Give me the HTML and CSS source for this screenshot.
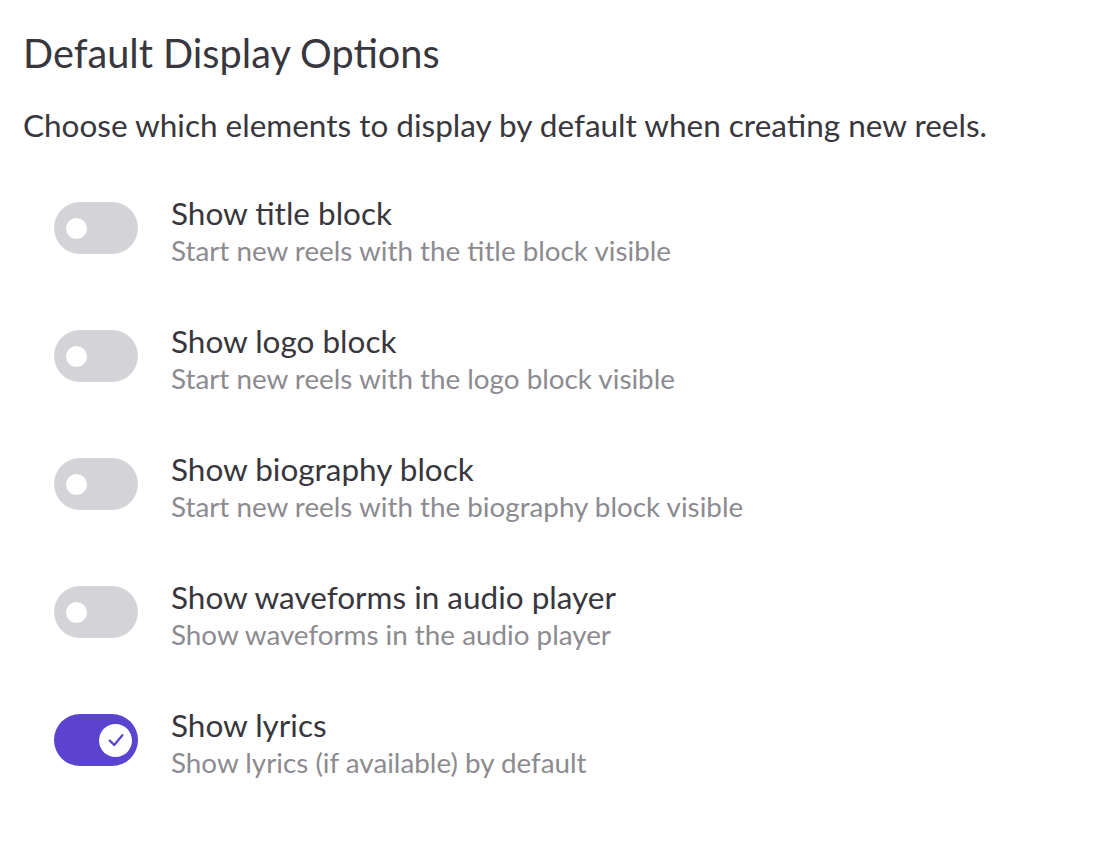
FILE: index.html
```html
<!DOCTYPE html>
<html lang="en">
<head>
<meta charset="utf-8">
<link rel="stylesheet" href="styles.css">
</head>
<body>
<main class="settings">
  <h1 class="heading">Default Display Options</h1>
  <p class="intro">Choose which elements to display by default when creating new reels.</p>
  <div class="options">
    <div class="option">
      <span class="switch"><span class="knob"></span></span>
      <div class="text">
        <div class="label">Show title block</div>
        <div class="hint">Start new reels with the title block visible</div>
      </div>
    </div>
    <div class="option">
      <span class="switch"><span class="knob"></span></span>
      <div class="text">
        <div class="label">Show logo block</div>
        <div class="hint">Start new reels with the logo block visible</div>
      </div>
    </div>
    <div class="option">
      <span class="switch"><span class="knob"></span></span>
      <div class="text">
        <div class="label">Show biography block</div>
        <div class="hint">Start new reels with the biography block visible</div>
      </div>
    </div>
    <div class="option">
      <span class="switch"><span class="knob"></span></span>
      <div class="text">
        <div class="label">Show waveforms in audio player</div>
        <div class="hint">Show waveforms in the audio player</div>
      </div>
    </div>
    <div class="option">
      <span class="switch on"><span class="knob"><svg class="check" viewBox="0 0 22 22" width="22" height="22"><path d="M4.8 11.6 L9.2 16 L17.4 6.2" fill="none" stroke="#5b42cf" stroke-width="2.3" stroke-linecap="round" stroke-linejoin="round"/></svg></span></span>
      <div class="text">
        <div class="label">Show lyrics</div>
        <div class="hint">Show lyrics (if available) by default</div>
      </div>
    </div>
  </div>
</main>
</body>
</html>
```
FILE: styles.css
```css
html, body {
  margin: 0;
  padding: 0;
  background: #ffffff;
}
body {
  font-family: Lato, "Open Sans", sans-serif;
  color: #37373d;
}
.settings {
  padding: 30px 0 0 23px;
}
.heading {
  margin: 0;
  font-size: 39.7px;
  line-height: 46px;
  font-weight: 400;
  color: #37373d;
}
.intro {
  margin: 30px 0 0 0;
  font-size: 31.5px;
  line-height: 38px;
  color: #37373d;
}
.options {
  margin: 50px 0 0 31px;
  display: flex;
  flex-direction: column;
  gap: 52px;
}
.option {
  display: flex;
  align-items: flex-start;
  gap: 33px;
}
.switch {
  flex: none;
  width: 84px;
  height: 52px;
  margin-top: 8px;
  border-radius: 26px;
  background: #d3d3d8;
  display: flex;
  align-items: center;
  padding-left: 12px;
  box-sizing: border-box;
}
.switch .knob {
  width: 21px;
  height: 21px;
  border-radius: 50%;
  background: #ffffff;
}
.switch.on {
  background: #5b42cf;
  justify-content: flex-end;
  padding-left: 0;
  padding-right: 6px;
}
.switch.on .knob {
  width: 33px;
  height: 33px;
  display: flex;
  align-items: center;
  justify-content: center;
}
.label {
  font-size: 31.5px;
  line-height: 38px;
  color: #37373d;
}
.hint {
  font-size: 27.8px;
  line-height: 38px;
  color: #8b8b90;
}
```
